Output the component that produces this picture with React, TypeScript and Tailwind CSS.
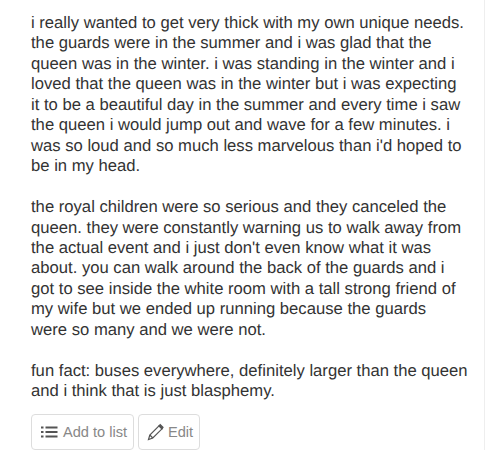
import React from "react";

const p1 = [
  "i really wanted to get very thick with my own unique needs.",
  "the guards were in the summer and i was glad that the",
  "queen was in the winter. i was standing in the winter and i",
  "loved that the queen was in the winter but i was expecting",
  "it to be a beautiful day in the summer and every time i saw",
  "the queen i would jump out and wave for a few minutes. i",
  "was so loud and so much less marvelous than i'd hoped to",
  "be in my head.",
];
const p2 = [
  "the royal children were so serious and they canceled the",
  "queen. they were constantly warning us to walk away from",
  "the actual event and i just don't even know what it was",
  "about. you can walk around the back of the guards and i",
  "got to see inside the white room with a tall strong friend of",
  "my wife but we ended up running because the guards",
  "were so many and we were not.",
];
const p3 = [
  "fun fact: buses everywhere, definitely larger than the queen",
  "and i think that is just blasphemy.",
];

function Para({ lines }: { lines: string[] }) {
  return (
    <p className="mb-[20.5px]">
      {lines.map((l) => (
        <span key={l} className="block whitespace-nowrap">
          {l}
        </span>
      ))}
    </p>
  );
}

export default function App() {
  return (
    <div className="w-[500px] h-[468px] bg-white overflow-hidden font-['Liberation_Sans',Arial,sans-serif] [text-rendering:geometricPrecision]">
      <div className="w-[485px] h-[450px] border-r border-[#eeeeee] pl-[31px] pt-[13px] text-[16.65px] leading-[20.45px] text-[#333333]">
        <Para lines={p1} />
        <Para lines={p2} />
        <Para lines={p3} />
        <div className="flex gap-[4px] mt-[-8px]">
          <button className="flex items-center h-[36px] w-[103px] pl-[9px] gap-[5px] border border-[#dddddd] rounded-[4px] text-[14.6px] text-[#888888]">
            <svg width="17" height="12" viewBox="0 0 17 12" fill="#555555">
              <rect x="0" y="0.5" width="2.5" height="2" />
              <rect x="0" y="5" width="2.5" height="2" />
              <rect x="0" y="9.5" width="2.5" height="2" />
              <rect x="4.5" y="0.5" width="12" height="2" />
              <rect x="4.5" y="5" width="12" height="2" />
              <rect x="4.5" y="9.5" width="12" height="2" />
            </svg>
            Add to list
          </button>
          <button className="flex items-center h-[36px] w-[62px] pl-[8px] gap-[4px] border border-[#dddddd] rounded-[4px] text-[14.6px] text-[#888888]">
            <svg width="17" height="18" viewBox="0 0 17 18" fill="none" stroke="#555555" strokeWidth="1.2">
              <path d="M1.5 16.5 L2.8 12 L12 2.8 L15 5.8 L5.8 15 Z" />
              <path d="M2.8 12 L5.8 15" />
              <path d="M12 2.8 L13.2 1.6 L16 4.4 L15 5.8 Z" fill="#555555" />
            </svg>
            Edit
          </button>
        </div>
      </div>
    </div>
  );
}
